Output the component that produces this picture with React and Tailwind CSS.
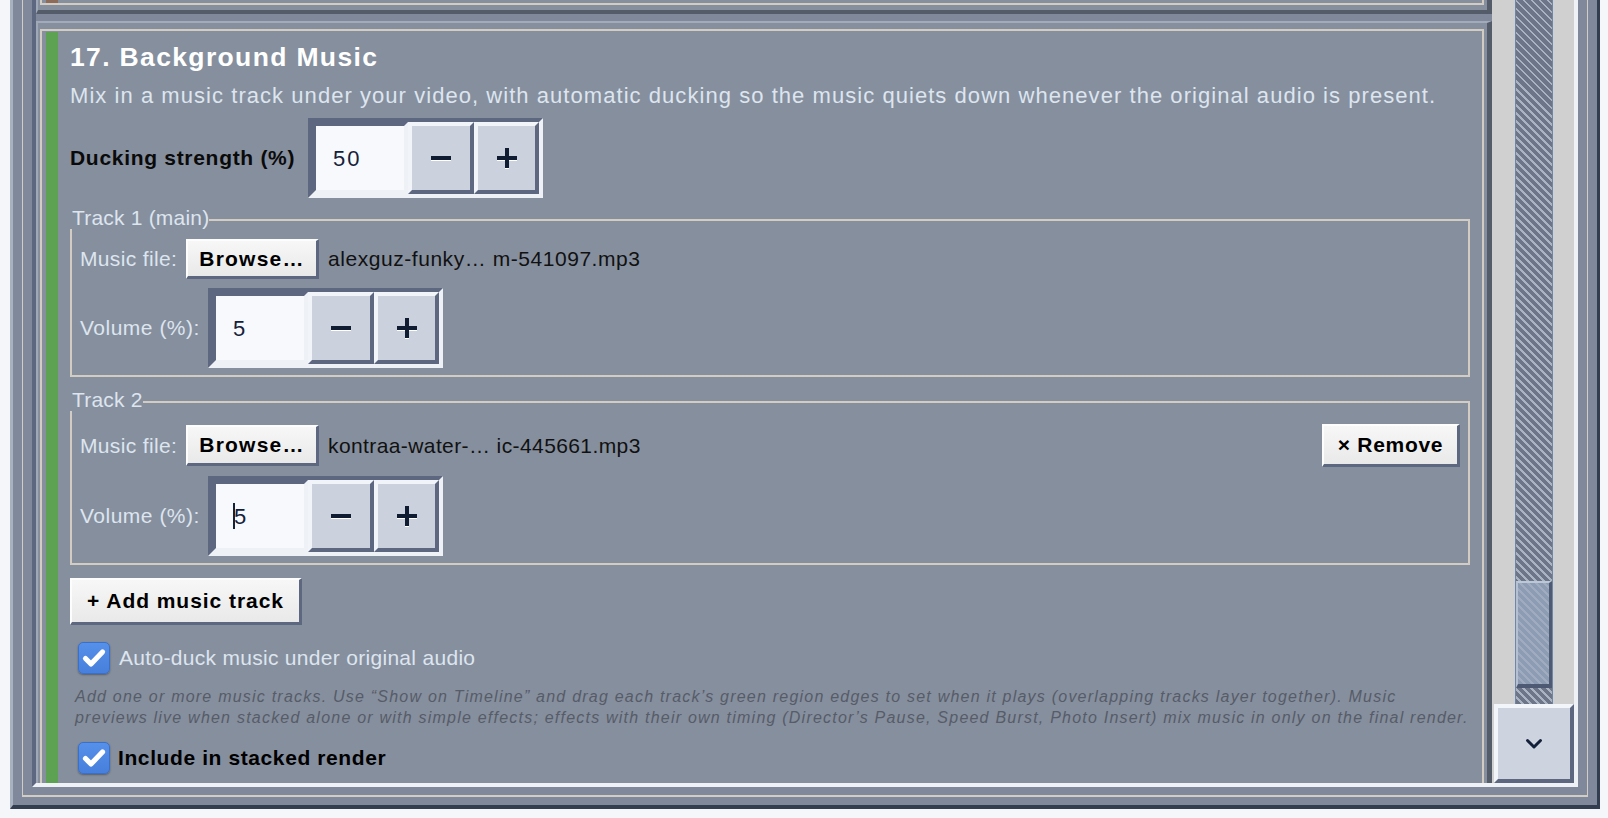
import React from "react";

const FONT = "font-['Liberation_Sans',Arial,sans-serif]";

function StepBtn({ w, plus }) {
  return (
    <div
      className={
        "h-full flex items-center justify-center bg-[#cbd2de] border-t-4 border-l-4 border-t-[#f1f4f9] border-l-[#f1f4f9] border-r-4 border-b-4 border-r-[#5d6880] border-b-[#5d6880] " +
        (w === 66 ? "w-[66px]" : "w-[65px]")
      }
    >
      <div className="relative w-[20px] h-[20px]">
        <div className="absolute left-0 top-[8px] w-[20px] h-[4px] bg-[#101c31] shadow-[0_1px_0_#ffffff]" />
        {plus && (
          <div className="absolute left-[8px] top-0 w-[4px] h-[20px] bg-[#101c31] shadow-[0_1px_0_#ffffff]" />
        )}
      </div>
    </div>
  );
}

function Stepper({ value, caret }) {
  return (
    <div className="flex w-[235px] h-[80px] shrink-0 border-4 border-t-[#5d6880] border-l-[#5d6880] border-b-[#eef2f7] border-r-[#eef2f7]">
      <div className="w-[96px] h-full border-4 border-t-[#5d6880] border-l-[#5d6880] border-b-[#eef2f7] border-r-[#eef2f7] bg-[#f7f9fd] flex items-center pl-[17px] text-[22px] tracking-[2px] text-[#14213a]">
        {caret && <span className="inline-block w-[2px] h-[26px] bg-[#14213a] -mr-[1px]" />}
        <span>{value}</span>
      </div>
      <StepBtn w={66} />
      <StepBtn w={65} plus />
    </div>
  );
}

const BTN =
  "flex items-center justify-center bg-linear-to-b from-[#f7f7f7] to-[#e9e9e9] border-t-2 border-l-2 border-t-[#fdfdfd] border-l-[#fdfdfd] border-r-[3px] border-b-[3px] border-r-[#5d6880] border-b-[#5d6880] text-[21px] font-bold text-black";

function Checkbox() {
  return (
    <div className="w-[32px] h-[32px] shrink-0 rounded-[5px] bg-linear-to-b from-[#5590ea] to-[#4680dc] border border-[#3b70c8] shadow-[0_1px_2px_rgba(0,0,0,0.35)] flex items-center justify-center">
      <svg width="26" height="26" viewBox="0 0 26 26">
        <path d="M4.5 13.5 L10 19 L21.5 7" fill="none" stroke="#ffffff" strokeWidth="5.2" strokeLinecap="round" strokeLinejoin="round" />
      </svg>
    </div>
  );
}

function Header({ legend }) {
  return (
    <div className="flex h-[22px]">
      <span className="pl-[2px] text-[21px] leading-[22px] tracking-[0.2px] text-[#dde5ef] whitespace-nowrap">{legend}</span>
      <div className="flex-1 mt-[12px] border-t-2 border-r-2 border-[#d2ccc2]" />
    </div>
  );
}

function Chevron() {
  return (
    <svg width="18" height="12" viewBox="0 0 18 12">
      <path d="M2.5 2.5 L9 9 L15.5 2.5" fill="none" stroke="#13203a" strokeWidth="3" strokeLinecap="round" strokeLinejoin="round" />
    </svg>
  );
}

export default function App() {
  return (
    <div className={"w-[1608px] h-[818px] overflow-hidden bg-[#f4f6fa] " + FONT}>
      <div className="ml-[10px] mr-[8px] h-[809px] flex flex-col border-l-[3px] border-r-[3px] border-b-4 border-l-[#a7b1c0] border-r-[#333d50] border-b-[#333d50] bg-[#7f899b] px-[9px] pb-[8px]">
        <div className="flex-1 min-h-0 flex flex-col border-l border-r border-b-2 border-[#d2ccc2] px-[9px] pb-[8px]">
          <div className="flex-1 min-h-0 flex border-l-4 border-r-4 border-b-4 border-l-[#5d6880] border-r-[#eef2f7] border-b-[#eef2f7]">
            {/* viewport */}
            <div className="flex-1 min-w-0 overflow-hidden bg-[#7f899b]">
              {/* previous card (scrolled) */}
              <div className="border-l-2 border-r-[5px] border-b-4 border-l-[#9fa8b7] border-r-[#545c6a] border-b-[#545c6a] bg-[#868f9e] pl-[2px] pr-[3px] pb-[5px]">
                <div className="h-[5px] border-l-2 border-r-2 border-b-2 border-[#d2ccc2] pl-[4px]">
                  <div className="w-[12px] h-[3px] bg-[#8c6b5a]" />
                </div>
              </div>

              {/* current card */}
              <div className="mt-[7px] border-t-2 border-l-2 border-t-[#a2abba] border-l-[#9fa8b7] border-r-[5px] border-r-[#545c6a] bg-[#868f9e] pl-[2px] pr-[3px] pt-[6px]">
                <div className="border-t-2 border-l-2 border-r-2 border-[#d2ccc2] pl-[4px] pt-[1px]">
                  <div className="border-l-[12px] border-l-[#5da153] pl-[12px] pr-[12px] pt-[10px] pb-[60px]">
                    <div className="text-[26.5px] font-bold leading-[30px] tracking-[1.35px] text-white">17. Background Music</div>
                    <div className="mt-[11px] text-[22px] leading-[26px] tracking-[1.05px] text-[#dde5ef] whitespace-nowrap">
                      Mix in a music track under your video, with automatic ducking so the music quiets down whenever the original audio is present.
                    </div>

                    <div className="mt-[9px] flex items-center">
                      <div className="w-[238px] text-[21px] font-bold tracking-[0.7px] text-[#0a0a0a]">Ducking strength (%)</div>
                      <Stepper value="50" />
                    </div>

                    {/* Track 1 */}
                    <div className="mt-[9px]">
                      <Header legend="Track 1 (main)" />
                      <div className="border-l-2 border-r-2 border-b-2 border-[#d2ccc2] px-[8px] pt-[10px] pb-[7px]">
                        <div className="flex items-center h-[40px]">
                          <div className="w-[106px] text-[21px] tracking-[0.35px] text-[#dde5ef]">Music file:</div>
                          <div className={"w-[133px] h-[40px] tracking-[1.2px] " + BTN}>Browse…</div>
                          <div className="ml-[9px] text-[21px] tracking-[0.55px] text-[#111111]">alexguz-funky… m-541097.mp3</div>
                        </div>
                        <div className="mt-[9px] flex items-center">
                          <div className="w-[128px] text-[21px] tracking-[0.5px] text-[#dde5ef]">Volume (%):</div>
                          <Stepper value="5" />
                        </div>
                      </div>
                    </div>

                    {/* Track 2 */}
                    <div className="mt-[12px]">
                      <Header legend="Track 2" />
                      <div className="border-l-2 border-r-2 border-b-2 border-[#d2ccc2] px-[8px] pt-[13px] pb-[7px]">
                        <div className="flex items-center h-[43px]">
                          <div className="w-[106px] text-[21px] tracking-[0.35px] text-[#dde5ef]">Music file:</div>
                          <div className={"w-[133px] h-[41px] tracking-[1.2px] " + BTN}>Browse…</div>
                          <div className="ml-[9px] text-[21px] tracking-[0.4px] text-[#111111]">kontraa-water-… ic-445661.mp3</div>
                          <div className={"ml-auto w-[138px] h-[43px] tracking-[0.7px] " + BTN}>× Remove</div>
                        </div>
                        <div className="mt-[9px] flex items-center">
                          <div className="w-[128px] text-[21px] tracking-[0.5px] text-[#dde5ef]">Volume (%):</div>
                          <Stepper value="5" caret />
                        </div>
                      </div>
                    </div>

                    <div className={"mt-[13px] w-[232px] h-[47px] tracking-[0.95px] " + BTN}>+ Add music track</div>

                    <div className="mt-[17px] ml-[8px] flex items-center gap-[9px]">
                      <Checkbox />
                      <span className="text-[21px] tracking-[0.3px] text-[#dde5ef]">Auto-duck music under original audio</span>
                    </div>

                    <div className="mt-[12px] ml-[5px] text-[16px] italic leading-[21px] tracking-[1.22px] text-[#565c68] whitespace-nowrap">
                      Add one or more music tracks. Use “Show on Timeline” and drag each track’s green region edges to set when it plays (overlapping tracks layer together). Music
                      <br />
                      previews live when stacked alone or with simple effects; effects with their own timing (Director’s Pause, Speed Burst, Photo Insert) mix music in only on the final render.
                    </div>

                    <div className="mt-[14px] ml-[8px] flex items-center gap-[8px]">
                      <Checkbox />
                      <span className="text-[21px] font-bold tracking-[0.6px] text-black">Include in stacked render</span>
                    </div>
                  </div>
                </div>
              </div>
            </div>

            {/* scrollbar */}
            <div className="w-[82px] shrink-0 flex flex-col bg-[#d0d0d0]">
              <div className="flex-1 min-h-0 ml-[23px] mr-[21px] border-x border-[#6f86a8] bg-[repeating-linear-gradient(45deg,#6c7688_0px,#6c7688_4px,#a9b3c4_4px,#a9b3c4_5.66px)] flex flex-col justify-end pb-[16px]">
                <div className="h-[107px] border-t-2 border-l-2 border-t-[#bcc7d8] border-l-[#b5c0d2] border-r-[3px] border-b-4 border-r-[#4e5a73] border-b-[#4e5a73] bg-[repeating-linear-gradient(45deg,#8d9bb3_0px,#8d9bb3_4px,#9eabc1_4px,#9eabc1_5.66px)]" />
              </div>
              <div className="h-[79px] ml-[2px] border-4 border-t-[#f2f5fa] border-l-[#f2f5fa] border-b-[#5d6880] border-r-[#5d6880] bg-[#cdd4e0] flex items-center justify-center">
                <Chevron />
              </div>
            </div>
          </div>
        </div>
      </div>
    </div>
  );
}
